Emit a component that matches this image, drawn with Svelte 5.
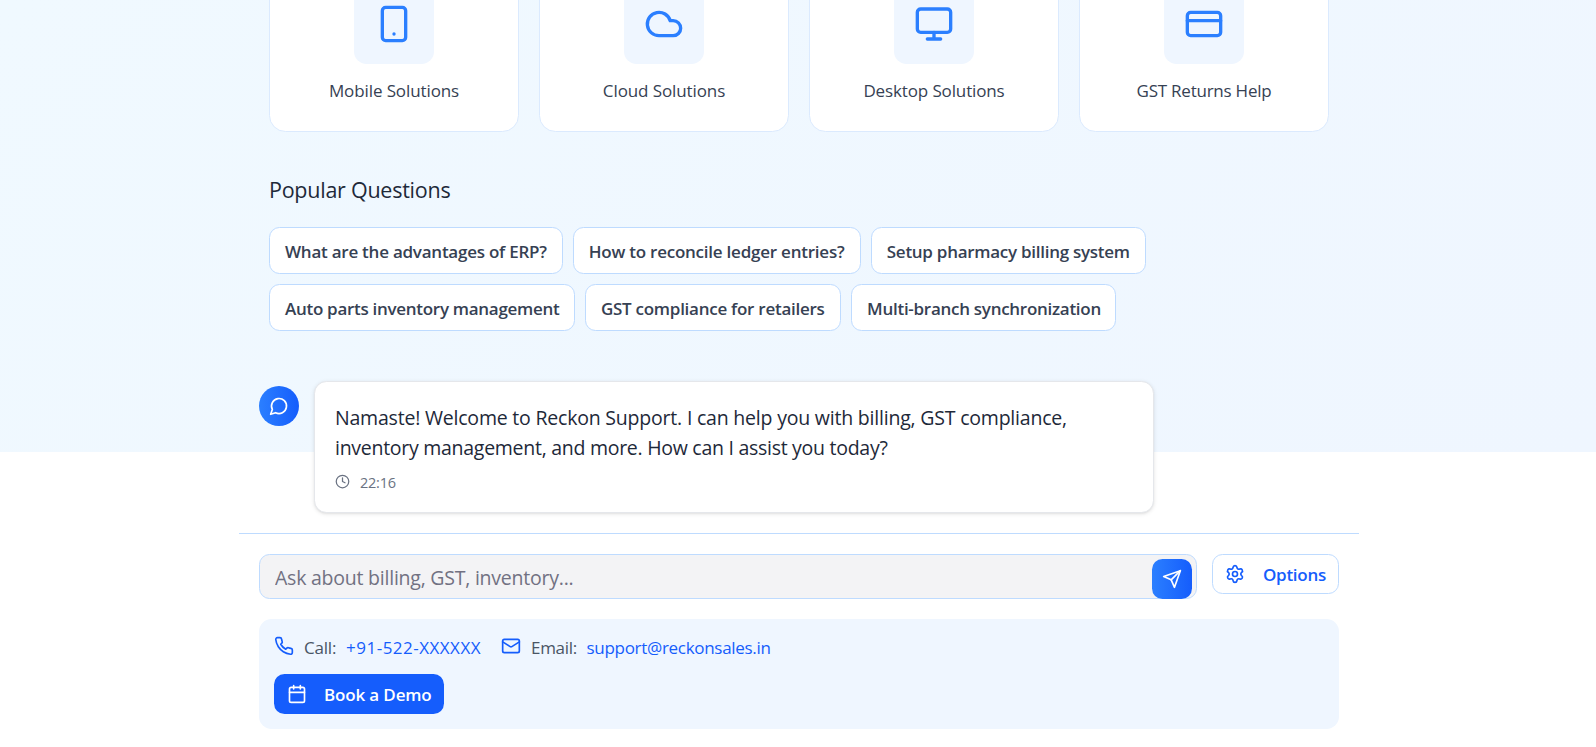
<script>
  const solutions = [
    { label: 'Mobile Solutions', icon: 'phone', ls: -0.1 },
    { label: 'Cloud Solutions', icon: 'cloud', ls: -0.1 },
    { label: 'Desktop Solutions', icon: 'monitor', ls: -0.13 },
    { label: 'GST Returns Help', icon: 'card', ls: -0.24 }
  ];
  const questions = [
    { text: 'What are the advantages of ERP?', w: 293.7, ls: -0.24 },
    { text: 'How to reconcile ledger entries?', w: 288.1, ls: -0.23 },
    { text: 'Setup pharmacy billing system', w: 274.8, ls: -0.27 },
    { text: 'Auto parts inventory management', w: 305.9, ls: -0.29 },
    { text: 'GST compliance for retailers', w: 256.2, ls: -0.26 },
    { text: 'Multi-branch synchronization', w: 265, ls: -0.28 }
  ];
</script>

<div class="page">
  <div class="backdrop"></div>
  <main>
    <section class="welcome">
      <div class="cards">
        {#each solutions as s}
          <div class="card">
            <div class="tile">
              <svg class="icon" width="40" height="40" viewBox="0 0 24 24">
                {#if s.icon === 'phone'}
                  <rect width="14" height="20" x="5" y="2" rx="2" /><path d="M12 18h.01" />
                {:else if s.icon === 'cloud'}
                  <path d="M17.5 19H9a7 7 0 1 1 6.71-9h1.79a4.5 4.5 0 1 1 0 9Z" />
                {:else if s.icon === 'monitor'}
                  <rect width="20" height="14" x="2" y="3" rx="2" /><path d="M8 21h8M12 17v4" />
                {:else}
                  <rect width="20" height="14" x="2" y="5" rx="2" /><path d="M2 10h20" />
                {/if}
              </svg>
            </div>
            <div class="label" style="letter-spacing:{s.ls}px">{s.label}</div>
          </div>
        {/each}
      </div>
      <h3>Popular Questions</h3>
      <div class="chips">
        {#each questions as q}
          <button class="chip" style="width:{q.w}px;letter-spacing:{q.ls}px">{q.text}</button>
        {/each}
      </div>
    </section>

    <section class="message">
      <div class="avatar">
        <svg class="icon" width="20" height="20" viewBox="0 0 24 24"><path d="M7.9 20A9 9 0 1 0 4 16.1L2 22Z" /></svg>
      </div>
      <div class="bubble">
        <p><span class="l1">Namaste! Welcome to Reckon Support. I can help you with billing, GST compliance,</span><br /><span class="l2">inventory management, and more. How can I assist you today?</span></p>
        <div class="time">
          <svg class="icon" width="15" height="15" viewBox="0 0 24 24"><circle cx="12" cy="12" r="10" /><path d="M12 6v6l4 2" /></svg>
          <span>22:16</span>
        </div>
      </div>
    </section>

    <footer>
      <div class="compose">
        <div class="field">
          <input placeholder="Ask about billing, GST, inventory..." />
          <button class="send" aria-label="Send">
            <svg class="icon" width="20" height="20" viewBox="0 0 24 24"><path d="m22 2-7 20-4-9-9-4Z" /><path d="M22 2 11 13" /></svg>
          </button>
        </div>
        <button class="options">
          <svg class="icon" width="20" height="20" viewBox="0 0 24 24"><path d="M9.671 4.136a2.34 2.34 0 0 1 4.659 0 2.34 2.34 0 0 0 3.319 1.915 2.34 2.34 0 0 1 2.33 4.033 2.34 2.34 0 0 0 0 3.831 2.34 2.34 0 0 1-2.33 4.033 2.34 2.34 0 0 0-3.319 1.915 2.34 2.34 0 0 1-4.659 0 2.34 2.34 0 0 0-3.32-1.915 2.34 2.34 0 0 1-2.33-4.033 2.34 2.34 0 0 0 0-3.831A2.34 2.34 0 0 1 6.35 6.051a2.34 2.34 0 0 0 3.319-1.915" /><circle cx="12" cy="12" r="3" /></svg>
          <span>Options</span>
        </button>
      </div>
      <div class="contact">
        <div class="lines">
          <div class="line call">
            <svg class="icon" width="20" height="20" viewBox="0 0 24 24"><path d="M22 16.92v3a2 2 0 0 1-2.18 2 19.79 19.79 0 0 1-8.63-3.07 19.5 19.5 0 0 1-6-6 19.79 19.79 0 0 1-3.07-8.67A2 2 0 0 1 4.11 2h3a2 2 0 0 1 2 1.72 12.84 12.84 0 0 0 .7 2.81 2 2 0 0 1-.45 2.11L8.09 9.91a16 16 0 0 0 6 6l1.27-1.27a2 2 0 0 1 2.11-.45 12.84 12.84 0 0 0 2.81.7A2 2 0 0 1 22 16.92z" /></svg>
            <span class="key">Call:</span><a class="tel" href="#call">+91-522-XXXXXX</a>
          </div>
          <div class="line">
            <svg class="icon" width="20" height="20" viewBox="0 0 24 24"><rect width="20" height="16" x="2" y="4" rx="2" /><path d="m22 7-8.97 5.7a1.94 1.94 0 0 1-2.06 0L2 7" /></svg>
            <span class="key mailkey">Email:</span><a class="mail" href="#mail">support@reckonsales.in</a>
          </div>
        </div>
        <button class="demo">
          <svg class="icon" width="20" height="20" viewBox="0 0 24 24"><path d="M8 2v4M16 2v4" /><rect width="18" height="18" x="3" y="4" rx="2" /><path d="M3 10h18" /></svg>
          <span>Book a Demo</span>
        </button>
      </div>
    </footer>
  </main>
</div>

<style>
  :global(body) { background: #fff; overflow: hidden; }
  .page { position: relative; height: 747px; overflow: hidden; font-family: "Open Sans", "Noto Sans", sans-serif; font-size: 17px; color: #364153; }
  .page * { box-sizing: border-box; }
  .backdrop { position: absolute; inset: 0 0 auto; height: 452px; background: linear-gradient(135deg, #f0f9ff, #eff6ff); }
  main { position: relative; width: 1120px; margin-left: 239px; display: flow-root; }
  button { font-family: inherit; font-size: 17px; font-weight: 600; margin: 0; padding: 0; cursor: pointer; }
  .icon { display: block; flex: none; fill: none; stroke: currentColor; stroke-width: 2; stroke-linecap: round; stroke-linejoin: round; }

  .welcome { padding: 0 30px; }
  .cards { display: grid; grid-template-columns: repeat(4, 250px); gap: 20px; margin-top: -42px; }
  .card { height: 174px; padding-top: 25px; background: #fff; border: 1px solid #dbeafe; border-radius: 16.5px; display: flex; flex-direction: column; align-items: center; }
  .tile { width: 80px; height: 80px; border-radius: 12.5px; background: #eff6ff; color: #2b7fff; display: grid; place-items: center; }
  .label { margin-top: 14px; line-height: 25px; white-space: nowrap; }
  h3 { margin: 43px 0 22px; font-size: 21.5px; line-height: 30px; font-weight: 400; letter-spacing: -0.25px; color: #1e2939; }
  .chips { display: flex; flex-wrap: wrap; gap: 10px; width: 900px; }
  .chip { height: 47px; background: #fff; border: 1px solid #bedbff; border-radius: 10.5px; color: #364153; white-space: nowrap; text-align: left; padding: 2px 15px 0; }

  .message { display: flex; gap: 15px; padding: 0 20px; margin-top: 50px; }
  .avatar { width: 40px; height: 40px; margin-top: 5px; border-radius: 50%; color: #fff; background: linear-gradient(90deg, #2b7fff, #155dfc); display: grid; place-items: center; }
  .bubble { width: 840px; height: 132px; padding: 21px 20px; background: #fff; border: 1px solid #e5e7eb; border-radius: 12.5px; box-shadow: 0 1px 4px rgba(0,0,0,.1), 0 1px 2.5px -1px rgba(0,0,0,.1); }
  .bubble p { margin: 0; font-size: 19.5px; line-height: 30px; color: #1e2939; white-space: nowrap; }
  .l1 { letter-spacing: -0.205px; }
  .l2 { letter-spacing: -0.275px; }
  .time { display: flex; align-items: center; gap: 10px; height: 20px; margin-top: 9px; font-size: 14.5px; letter-spacing: -0.25px; color: #6a7282; }
  .time .icon { margin-top: -1px; }

  footer { margin-top: 20px; padding: 20px; border-top: 1px solid #bedbff; }
  .compose { display: flex; gap: 15px; align-items: flex-start; }
  .field { position: relative; width: 938px; height: 45px; }
  input { display: block; width: 100%; height: 45px; padding: 2px 50px 0 15px; border: 1px solid #bedbff; border-radius: 10.5px; background: #f3f3f5; font-family: inherit; font-size: 19.5px; letter-spacing: -0.23px; outline: 0; }
  input::placeholder { color: #717182; opacity: 1; }
  .send { position: absolute; right: 5px; top: 5px; width: 40px; height: 40px; border: 0; border-radius: 10.5px; color: #fff; background: linear-gradient(90deg, #2b7fff, #155dfc); display: grid; place-items: center; }
  .options { display: flex; align-items: center; width: 127px; height: 40px; padding-left: 12px; gap: 18px; background: #fff; border: 1px solid #bedbff; border-radius: 10.5px; color: #155dfc; letter-spacing: -0.28px; }
  .contact { margin-top: 20px; height: 110px; padding: 15px; background: #eff6ff; border-radius: 12.5px; }
  .lines { display: flex; gap: 20px; height: 25px; }
  .line { display: flex; align-items: center; height: 25px; line-height: 25px; color: #4a5565; white-space: nowrap; }
  .line .icon { color: #155dfc; margin-right: 10px; margin-top: -1px; }
  .line span, .line a { padding-top: 1px; }
  .key { width: 43px; letter-spacing: -0.2px; }
  .mailkey { width: 55.5px; letter-spacing: -0.28px; }
  .call { width: 207px; }
  .line a { color: #155dfc; text-decoration: none; }
  .tel { letter-spacing: 0.48px; }
  .mail { letter-spacing: -0.3px; }
  .demo { display: flex; align-items: center; gap: 17px; width: 170px; height: 40px; margin-top: 15px; padding-left: 13px; border: 0; border-radius: 10.5px; background: #155dfc; color: #fff; letter-spacing: -0.15px; }
</style>
